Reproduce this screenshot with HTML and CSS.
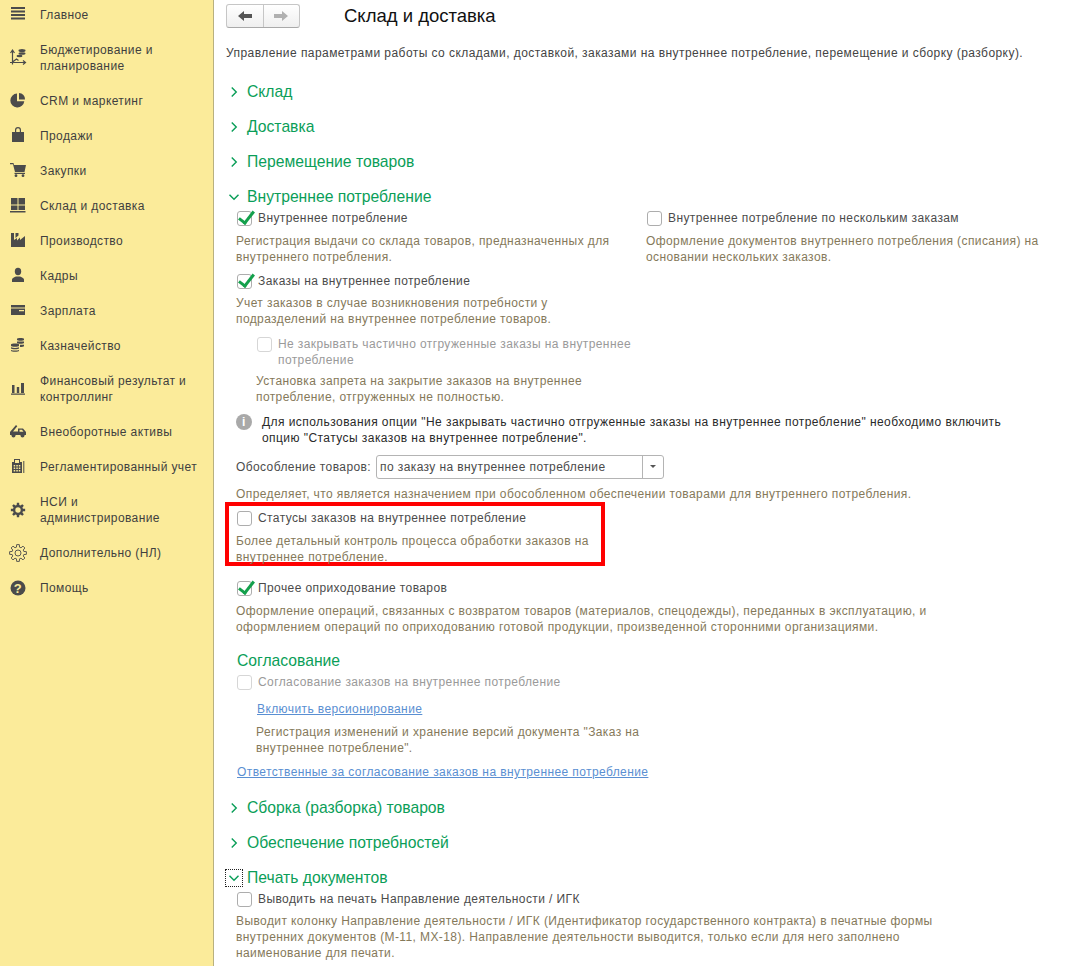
FILE: index.html
```html
<!DOCTYPE html>
<html lang="ru">
<head>
  <meta charset="UTF-8">
  <meta name="viewport" content="width=device-width, initial-scale=1.0">
  <title>Склад и доставка</title>
  <link rel="stylesheet" href="styles.css">
</head>
<body>
  <aside class="sidebar">
    <a class="menu-item">
      <svg class="menu-icon" viewBox="0 0 20 20"><path d="M3 2h14v2H3zM3 5.500h14v2H3zM3 9h14v2H3zM3 12.500h14v2H3z"/></svg>
      <span>Главное</span>
    </a>
    <a class="menu-item">
      <svg class="menu-icon" viewBox="0 0 20 20"><path d="M4.500 2.500v14M2.500 5l2-3 2 3M2 14.500h15M15 12.500l2.500 2-2.500 2M4.500 14l4-3 2 1.500" fill="none" stroke="#4b4b4b" stroke-width="1.200"/><ellipse cx="14" cy="2.500" rx="3.500" ry="1.500"/><ellipse cx="14" cy="5.500" rx="3.500" ry="1.300"/><ellipse cx="11.500" cy="8" rx="3" ry="1.300"/></svg>
      <span>Бюджетирование и<br>планирование</span>
    </a>
    <a class="menu-item">
      <svg class="menu-icon" viewBox="0 0 20 20"><path d="M9 2.500a7 7 0 1 0 7.300 7.800H9z"/><path d="M11 2a6 6 0 0 1 6 6.500h-6z"/></svg>
      <span>CRM и маркетинг</span>
    </a>
    <a class="menu-item">
      <svg class="menu-icon" viewBox="0 0 20 20"><path d="M4 6h3V4a3 3 0 0 1 6 0v2h3v10H4zM8.200 6h3.600V4a1.800 1.800 0 0 0-3.600 0z" fill-rule="evenodd"/></svg>
      <span>Продажи</span>
    </a>
    <a class="menu-item">
      <svg class="menu-icon" viewBox="0 0 20 20"><path d="M2 2h3.500l.5 2h12l-1.500 7H7L5 3.200H2z"/><path d="M6.500 11.800h10.500v1.200H6.500z"/><circle cx="8" cy="14.700" r="1.400"/><circle cx="15" cy="14.700" r="1.400"/></svg>
      <span>Закупки</span>
    </a>
    <a class="menu-item">
      <svg class="menu-icon" viewBox="0 0 20 20"><path d="M3 2h6.500v6.500H3zM10.500 2H17v6.500h-6.500zM3 9.500h6.500V14H3zM10.500 9.500H17V14h-6.500zM2 15h15.500v1.500H2z"/></svg>
      <span>Склад и доставка</span>
    </a>
    <a class="menu-item">
      <svg class="menu-icon" viewBox="0 0 20 20"><path d="M3 2h3v7l3-2v2.500l3-3V9l5-4v11H3z"/><path d="M7.500 2h3v2.500l-3 2.500z"/></svg>
      <span>Производство</span>
    </a>
    <a class="menu-item">
      <svg class="menu-icon" viewBox="0 0 20 20"><ellipse cx="10" cy="5.500" rx="3.200" ry="3.700"/><path d="M4 16v-2.500c0-1.500 2.500-2.300 4-3h4c1.500.7 4 1.500 4 3V16z"/></svg>
      <span>Кадры</span>
    </a>
    <a class="menu-item">
      <svg class="menu-icon" viewBox="0 0 20 20"><path d="M3 4h14v2.500H3zM3 7.500h14V14H3zM11 9v1.200h5V9z" fill-rule="evenodd"/></svg>
      <span>Зарплата</span>
    </a>
    <a class="menu-item">
      <svg class="menu-icon" viewBox="0 0 20 20"><path d="M9 2.800c0-1 7-1 7 0v1.300c0 1-7 1-7 0zM9 5.500h7v1.600c0 1-7 1-7 0zM12 8.800c2 0 4-.2 4-.4v1.600c0 .7-2 1-4 1zM3 8.500c0-1.200 8-1.200 8 0v1.500c0 1-8 1-8 0zM3 11.300c2 .8 6 .8 8 0v1.300c0 1-8 1-8 0zM3 13.900c2 .8 6 .8 8 0v.9c0 1.400-8 1.400-8 0z"/></svg>
      <span>Казначейство</span>
    </a>
    <a class="menu-item">
      <svg class="menu-icon" viewBox="0 0 20 20"><path d="M4 6h2.500v8H4zM8.800 8h2.400v6H8.800zM13 4h3v10h-3zM3 14.500h14v1.200H3z"/></svg>
      <span>Финансовый результат и<br>контроллинг</span>
    </a>
    <a class="menu-item">
      <svg class="menu-icon" viewBox="0 0 20 20"><path d="M2 10l6-7 1.300 1.300-4.300 5.200H10V6.500h5l3 3.500v3H2z"/><path d="M11.500 7.800v2h4l-1.500-2z" fill="#fbeb9a"/><circle cx="5.500" cy="13.500" r="2"/><circle cx="14.500" cy="13.500" r="2"/></svg>
      <span>Внеоборотные активы</span>
    </a>
    <a class="menu-item">
      <svg class="menu-icon" viewBox="0 0 20 20"><path d="M6 2h6v3h2v11H4V5h2zM7 3v3h4V3zM5.700 8v1.500h1.500V8zM8.300 8v1.500h1.500V8zM10.800 8v1.500h1.500V8zM5.700 10.500V12h1.500v-1.500zM8.300 10.500V12h1.500v-1.500zM10.800 10.500V12h1.500v-1.500zM5.700 13v1.500h1.500V13zM8.300 13v1.500h1.500V13zM10.800 13v1.500h1.500V13z" fill-rule="evenodd"/><path d="M15.300 4h1v12h-1z"/></svg>
      <span>Регламентированный учет</span>
    </a>
    <a class="menu-item">
      <svg class="menu-icon" viewBox="0 0 20 20"><use href="#gear-teeth" transform="translate(1.500 1.500) scale(.85)"/><circle cx="10" cy="10" r="2.700" fill="#fbeb9a"/></svg>
      <span>НСИ и<br>администрирование</span>
    </a>
    <a class="menu-item">
      <svg class="menu-icon" viewBox="0 0 20 20"><use href="#gear-teeth" fill="none" stroke="#4b4b4b" stroke-width=".9"/><circle cx="10" cy="10" r="3" fill="none" stroke="#4b4b4b" stroke-width=".9"/></svg>
      <span>Дополнительно (НЛ)</span>
    </a>
    <a class="menu-item">
      <svg class="menu-icon" viewBox="0 0 20 20"><circle cx="10" cy="10" r="7.500"/><text x="10" y="14.500" class="help-mark">?</text></svg>
      <span>Помощь</span>
    </a>
  </aside>

  <main class="content">
    <header class="page-head">
      <div class="nav-buttons">
        <button class="nav-btn">
          <svg viewBox="0 0 14 12" width="14" height="12"><path d="M0 6l6-5v3h8v4H6v3z" fill="#555"/></svg>
        </button>
        <button class="nav-btn">
          <svg viewBox="0 0 14 12" width="14" height="12"><path d="M14 6L8 1v3H0v4h8v3z" fill="#b0b0b0"/></svg>
        </button>
      </div>
      <h1>Склад и доставка</h1>
    </header>
    <p class="intro">Управление параметрами работы со складами, доставкой, заказами на внутреннее потребление, перемещение и сборку (разборку).</p>

    <h2 class="group first"><svg class="chevron" viewBox="0 0 16 16"><path d="M5 2l6 6-6 6"/></svg>Склад</h2>
    <h2 class="group"><svg class="chevron" viewBox="0 0 16 16"><path d="M5 2l6 6-6 6"/></svg>Доставка</h2>
    <h2 class="group"><svg class="chevron" viewBox="0 0 16 16"><path d="M5 2l6 6-6 6"/></svg>Перемещение товаров</h2>
    <h2 class="group"><svg class="chevron" viewBox="0 0 16 16"><path d="M2 5l6 6 6-6"/></svg>Внутреннее потребление</h2>

    <div class="group-body">
      <div class="columns">
        <div>
          <label class="option"><span class="check on"></span>Внутреннее потребление</label>
          <p class="note">Регистрация выдачи со склада товаров, предназначенных для внутреннего потребления.</p>
        </div>
        <div class="right-col">
          <label class="option"><span class="check"></span>Внутреннее потребление по нескольким заказам</label>
          <p class="note">Оформление документов внутреннего потребления (списания) на основании нескольких заказов.</p>
        </div>
      </div>

      <label class="option gap-8"><span class="check on"></span>Заказы на внутреннее потребление</label>
      <p class="note narrow tight">Учет заказов в случае возникновения потребности у подразделений на внутреннее потребление товаров.</p>

      <div class="nested">
        <label class="option disabled gap-9"><span class="check"></span><span>Не закрывать частично отгруженные заказы на внутреннее<br>потребление</span></label>
        <p class="note snug">Установка запрета на закрытие заказов на внутреннее<br>потребление, отгруженных не полностью.</p>
      </div>

      <div class="info">
        <span class="info-icon">i</span>
        <p>Для использования опции "Не закрывать частично отгруженные заказы на внутреннее потребление" необходимо включить<br>опцию "Статусы заказов на внутреннее потребление".</p>
      </div>

      <div class="field">
        <span>Обособление товаров:</span>
        <div class="select">
          <span class="select-value">по заказу на внутреннее потребление</span>
          <span class="select-arrow"></span>
        </div>
      </div>
      <p class="note">Определяет, что является назначением при обособленном обеспечении товарами для внутреннего потребления.</p>

      <div class="highlight">
        <label class="option"><span class="check"></span>Статусы заказов на внутреннее потребление</label>
        <p class="note">Более детальный контроль процесса обработки заказов на внутреннее потребление.</p>
      </div>

      <label class="option gap-14"><span class="check on"></span>Прочее оприходование товаров</label>
      <p class="note">Оформление операций, связанных с возвратом товаров (материалов, спецодежды), переданных в эксплуатацию, и<br>оформлением операций по оприходованию готовой продукции, произведенной сторонними организациями.</p>

      <h3 class="subgroup">Согласование</h3>
      <label class="option disabled gap-3"><span class="check"></span>Согласование заказов на внутреннее потребление</label>
      <div class="nested">
        <a class="link gap-11">Включить версионирование</a>
        <p class="note">Регистрация изменений и хранение версий документа "Заказ на<br>внутреннее потребление".</p>
      </div>
      <a class="link gap-8">Ответственные за согласование заказов на внутреннее потребление</a>
    </div>

    <h2 class="group after-body"><svg class="chevron" viewBox="0 0 16 16"><path d="M5 2l6 6-6 6"/></svg>Сборка (разборка) товаров</h2>
    <h2 class="group"><svg class="chevron" viewBox="0 0 16 16"><path d="M5 2l6 6-6 6"/></svg>Обеспечение потребностей</h2>
    <h2 class="group"><span class="focus-box"><svg class="chevron" viewBox="0 0 16 16"><path d="M2 5l6 6 6-6"/></svg></span>Печать документов</h2>

    <div class="group-body">
      <label class="option gap-3"><span class="check"></span>Выводить на печать Направление деятельности / ИГК</label>
      <p class="note tight">Выводит колонку Направление деятельности / ИГК (Идентификатор государственного контракта) в печатные формы<br>внутренних документов (М-11, МХ-18). Направление деятельности выводится, только если для него заполнено<br>наименование для печати.</p>
    </div>
  </main>

  <svg class="defs" width="0" height="0">
    <defs>
      <polygon id="gear-teeth" transform="translate(10 10)" points="5.8,-1.55 8.4,-1.33 8.4,1.33 5.8,1.55 5.2,3 6.88,5 5,6.88 3,5.2 1.55,5.8 1.33,8.4 -1.33,8.4 -1.55,5.8 -3,5.2 -5,6.88 -6.88,5 -5.2,3 -5.8,1.55 -8.4,1.33 -8.4,-1.33 -5.8,-1.55 -5.2,-3 -6.88,-5 -5,-6.88 -3,-5.2 -1.55,-5.8 -1.33,-8.4 1.33,-8.4 1.55,-5.8 3,-5.2 5,-6.88 6.88,-5 5.2,-3"/>
    </defs>
  </svg>
</body>
</html>
```

FILE: styles.css
```css
* {
  box-sizing: border-box;
}

html, body {
  height: 966px;
}

body {
  margin: 0;
  display: flex;
  overflow: hidden;
  background: #fff;
  color: #4b4b4b;
  font-family: "Liberation Sans", Arial, sans-serif;
  font-size: 12px;
  letter-spacing: .4px;
  line-height: 16px;
}

.defs {
  position: absolute;
}

/* left menu */
.sidebar {
  flex: 0 0 214px;
  display: flex;
  flex-direction: column;
  gap: 19px;
  padding: 7px 0 0 8px;
  background: #fbeb9a;
  border-right: 1px solid #b9b17f;
  color: #3f3f3f;
}

.menu-item {
  display: flex;
  align-items: center;
  gap: 12px;
}

.menu-icon {
  flex: none;
  width: 20px;
  height: 20px;
  margin: -2px 0;
  fill: #4b4b4b;
}

.help-mark {
  fill: #fbeb9a;
  font-size: 13px;
  font-weight: 700;
  text-anchor: middle;
}

/* main area */
.content {
  flex: 1;
  padding: 4px 0 0 12px;
}

.page-head {
  display: flex;
  align-items: center;
  gap: 44px;
}

.page-head h1 {
  margin: 0;
  color: #111;
  font-size: 18.500px;
  font-weight: 400;
  letter-spacing: 0;
  line-height: 24px;
}

.nav-buttons {
  display: flex;
  width: 74px;
  height: 24px;
  border: 1px solid #c6c6c6;
  border-bottom-color: #a9a9a9;
  border-radius: 3px;
  background: linear-gradient(#fff, #efefef);
}

.nav-btn {
  flex: 1;
  display: flex;
  align-items: center;
  justify-content: center;
  padding: 0;
  border: 0;
  background: none;
}

.nav-btn + .nav-btn {
  border-left: 1px solid #c6c6c6;
}

.intro {
  margin: 17px 0 0;
  color: #444;
  letter-spacing: .44px;
}

.group {
  display: flex;
  align-items: center;
  height: 20px;
  margin: 15px 0 0;
  color: #0a9e58;
  font-size: 15.700px;
  font-weight: 400;
  letter-spacing: 0;
  line-height: 20px;
}

.group.first {
  margin-top: 21px;
}

.group.after-body {
  margin-top: 18px;
}

.chevron {
  flex: none;
  width: 16px;
  height: 16px;
  margin: 0 5px 0 0;
  padding: 2px;
  fill: none;
  stroke: #0a9e58;
  stroke-width: 1.900;
}

.focus-box {
  display: flex;
  margin-right: 5px;
  outline: 1px dotted #222;
}

.focus-box .chevron {
  margin: 0;
}

.group-body {
  padding-left: 10px;
}

.columns {
  display: grid;
  grid-template-columns: 390px 400px;
  column-gap: 20px;
  margin-top: 3px;
}

.option {
  display: flex;
  align-items: flex-start;
  gap: 6px;
  padding-left: 1px;
}

.gap-3 { margin-top: 3px; }
.gap-8 { margin-top: 8px; }
.gap-9 { margin-top: 9px; }
.gap-11 { margin-top: 11px; }
.gap-14 { margin-top: 14px; }

.check {
  flex: none;
  position: relative;
  width: 15px;
  height: 15px;
  margin-top: 1px;
  border: 1px solid #adadad;
  border-radius: 3px;
  background: #fff;
}

.check.on::after {
  content: "";
  position: absolute;
  left: 4px;
  top: -4px;
  width: 6px;
  height: 13px;
  border: solid #14a04c;
  border-width: 0 3px 3px 0;
  transform: rotate(38deg);
}

.option.disabled {
  color: #9a9a9a;
}

.option.disabled .check {
  border-color: #d6d6d6;
}

.note {
  margin: 7px 0 0;
  color: #85795a;
}

.note.tight {
  margin-top: 6px;
}

.note.snug {
  margin-top: 5px;
}

.note.narrow {
  width: 340px;
}

.nested {
  padding-left: 20px;
}

.info {
  display: flex;
  align-items: flex-start;
  gap: 10px;
  margin-top: 9px;
  color: #2a2a2a;
  letter-spacing: .44px;
}

.info p {
  margin: 0;
}

.info-icon {
  flex: none;
  width: 16px;
  height: 16px;
  border-radius: 50%;
  background: #a9a9a9;
  color: #fff;
  font-size: 12px;
  font-weight: 700;
  line-height: 16px;
  text-align: center;
}

.field {
  display: flex;
  align-items: center;
  gap: 5px;
  margin-top: 9px;
}

.select {
  display: flex;
  width: 288px;
  height: 24px;
  border: 1px solid #b4b4b4;
  border-radius: 3px;
  line-height: 22px;
}

.select-value {
  flex: 1;
  padding-left: 3px;
}

.select-arrow {
  position: relative;
  width: 21px;
  border-left: 1px solid #b4b4b4;
}

.select-arrow::after {
  content: "";
  position: absolute;
  left: 7px;
  top: 9px;
  border: 3px solid transparent;
  border-top: 3px solid #555;
}

.highlight {
  width: 380px;
  height: 64px;
  margin: 0 0 0 -11px;
  padding: 4px 0 0 7px;
  border: 4px solid #f00;
}

.subgroup {
  margin: 16px 0 0 1px;
  color: #0a9e58;
  font-size: 15.700px;
  font-weight: 400;
  letter-spacing: 0;
  line-height: 20px;
}

.link {
  display: block;
  padding-left: 1px;
  color: #5a8fd2;
  text-decoration: underline;
}
```
